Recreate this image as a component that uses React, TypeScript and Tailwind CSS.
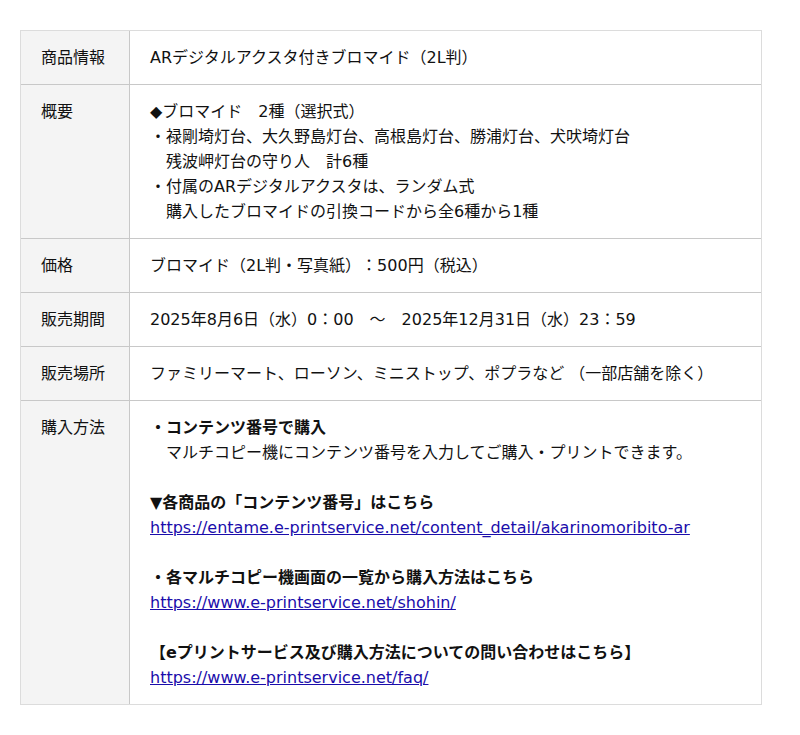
import React from "react";

const Row = ({ label, children, first }: { label: string; children: React.ReactNode; first?: boolean }) => (
  <div className={`flex ${first ? "" : "border-t border-[#c8c8c8]"}`}>
    <div className="w-[109px] shrink-0 bg-[#f4f4f4] border-r border-[#c8c8c8] px-5 py-[14px]">{label}</div>
    <div className="flex-1 px-5 py-[14px]">{children}</div>
  </div>
);

const A = ({ href }: { href: string }) => (
  <a href={href} className="text-[#1a0dab] underline">
    {href}
  </a>
);

export default function App() {
  return (
    <div
      className="bg-white pt-[30px] px-5 pb-8 text-[16px] leading-[25px] text-[#111] [text-spacing-trim:space-all]"
      style={{ fontFamily: '"DejaVu Sans", "Noto Sans CJK JP", sans-serif' }}
    >
      <div className="w-[742px] border border-[#dcdcdc]">
        <Row label="商品情報" first>
          ARデジタルアクスタ付きブロマイド（2L判）
        </Row>
        <Row label="概要">
          <div>◆ブロマイド　2種（選択式）</div>
          <div>・禄剛埼灯台、大久野島灯台、高根島灯台、勝浦灯台、犬吠埼灯台</div>
          <div>　残波岬灯台の守り人　計6種</div>
          <div>・付属のARデジタルアクスタは、ランダム式</div>
          <div>　購入したブロマイドの引換コードから全6種から1種</div>
        </Row>
        <Row label="価格">ブロマイド（2L判・写真紙）：500円（税込）</Row>
        <Row label="販売期間">2025年8月6日（水）0：00　～　2025年12月31日（水）23：59</Row>
        <Row label="販売場所">ファミリーマート、ローソン、ミニストップ、ポプラなど （一部店舗を除く）</Row>
        <Row label="購入方法">
          <div className="font-bold">・コンテンツ番号で購入</div>
          <div>　マルチコピー機にコンテンツ番号を入力してご購入・プリントできます。</div>
          <div className="h-[25px]" />
          <div className="font-bold">▼各商品の「コンテンツ番号」はこちら</div>
          <div>
            <A href="https://entame.e-printservice.net/content_detail/akarinomoribito-ar" />
          </div>
          <div className="h-[25px]" />
          <div className="font-bold">・各マルチコピー機画面の一覧から購入方法はこちら</div>
          <div>
            <A href="https://www.e-printservice.net/shohin/" />
          </div>
          <div className="h-[25px]" />
          <div className="font-bold">【eプリントサービス及び購入方法についての問い合わせはこちら】</div>
          <div>
            <A href="https://www.e-printservice.net/faq/" />
          </div>
        </Row>
      </div>
    </div>
  );
}
